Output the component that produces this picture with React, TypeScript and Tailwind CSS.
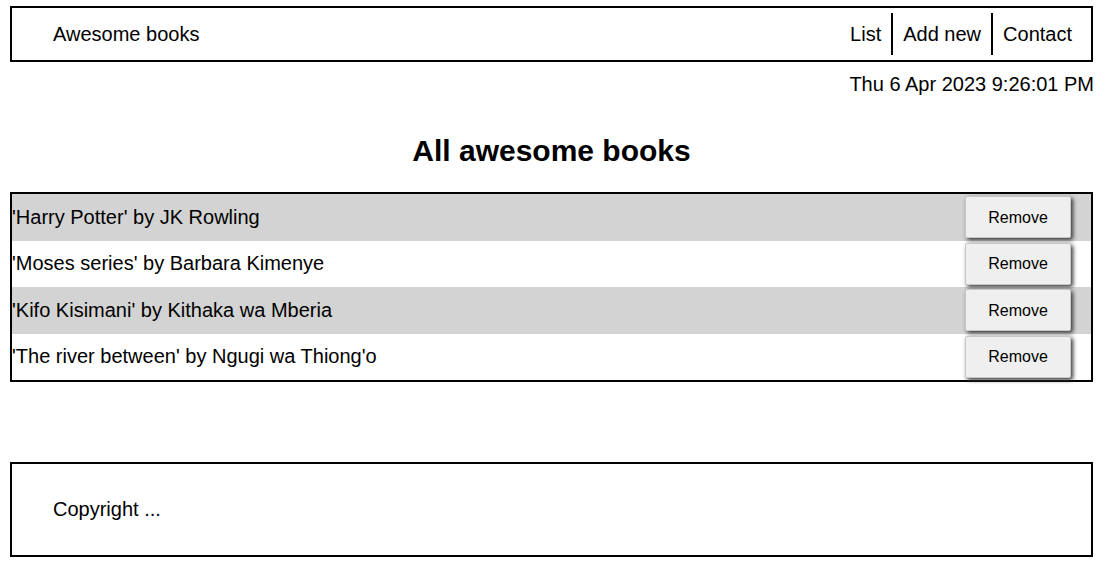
import React from 'react';

const books = [
  { title: 'Harry Potter', author: 'JK Rowling' },
  { title: 'Moses series', author: 'Barbara Kimenye' },
  { title: 'Kifo Kisimani', author: 'Kithaka wa Mberia' },
  { title: 'The river between', author: "Ngugi wa Thiong'o" },
];

export default function App() {
  return (
    <div className="min-h-screen bg-white text-black font-['Liberation_Sans',Arial,sans-serif] text-[20px] leading-[23px] pt-[6px] pl-[10px] pr-[9px]">
      <header className="flex items-center justify-between h-[56px] border-2 border-black pl-[41px] pr-[9px]">
        <span>Awesome books</span>
        <nav className="flex items-center">
          <NavLink>List</NavLink>
          <NavLink bordered>Add new</NavLink>
          <NavLink bordered>Contact</NavLink>
        </nav>
      </header>

      <p className="text-right mt-[11px] -mr-[1px]">Thu 6 Apr 2023 9:26:01 PM</p>

      <h2 className="text-center font-bold text-[30px] leading-[34px] mt-[38px]">All awesome books</h2>

      <ul className="mt-[24px] border-2 border-black">
        {books.map((b, i) => (
          <li
            key={b.title}
            className={`flex items-center justify-between h-[46.5px] pr-[20px] ${i % 2 === 0 ? 'bg-[#d3d3d3]' : 'bg-white'}`}
          >
            <span>
              '{b.title}' by {b.author}
            </span>
            <button className="w-[106px] h-[42px] bg-[#efefef] border border-[#c8c8c8] rounded-[2px] text-[16px] shadow-[2px_2px_4px_#333]">
              Remove
            </button>
          </li>
        ))}
      </ul>

      <footer className="mt-[80px] border-2 border-black h-[95px] flex items-center pl-[41px]">
        Copyright ...
      </footer>
    </div>
  );
}

const NavLink = ({ children, bordered }: { children: React.ReactNode; bordered?: boolean }) => (
  <a href="#" className={`px-[10px] h-[42px] flex items-center ${bordered ? 'border-l-2 border-black' : ''}`}>
    {children}
  </a>
);
